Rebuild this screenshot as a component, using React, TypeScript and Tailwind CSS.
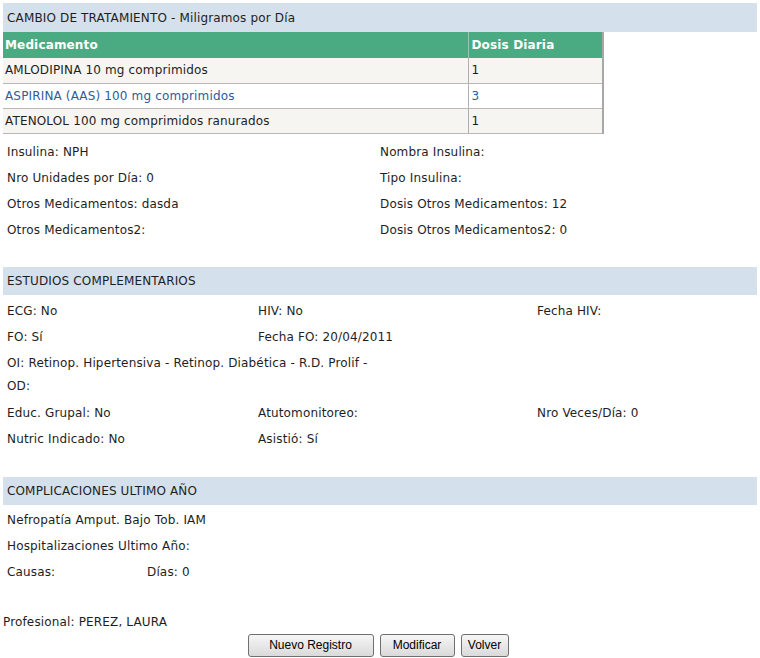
import React from "react";

const meds = [
  { name: "AMLODIPINA 10 mg comprimidos", dosis: "1", alt: false },
  { name: "ASPIRINA (AAS) 100 mg comprimidos", dosis: "3", alt: true },
  { name: "ATENOLOL 100 mg comprimidos ranurados", dosis: "1", alt: false },
];

const SectionHeader: React.FC<{ title: string }> = ({ title }) => (
  <div className="h-[28px] bg-[#d4e0ec] px-[4px] flex items-center">{title}</div>
);

const Row: React.FC<{ children: React.ReactNode }> = ({ children }) => (
  <div className="h-[26px] flex items-center px-[4px] whitespace-nowrap">{children}</div>
);

const Btn: React.FC<{ label: string; w: string }> = ({ label, w }) => (
  <button
    className={`${w} h-[23px] border border-[#707070] rounded-[3px] bg-gradient-to-b from-[#f6f6f6] to-[#dadada] text-[12px] text-black tracking-normal`}
    style={{ fontFamily: '"Liberation Sans", Arial, sans-serif' }}
  >
    {label}
  </button>
);

export default function App() {
  return (
    <div
      className="w-[760px] px-[3px] pt-[3px] text-[12px] tracking-[0.15px] text-[#1e1e1e]"
      style={{ fontFamily: '"DejaVu Sans", Tahoma, sans-serif' }}
    >
      {/* Tratamiento */}
      <div className="h-[29px] bg-[#d4e0ec] px-[4px] flex items-center">
        CAMBIO DE TRATAMIENTO - Miligramos por Día
      </div>
      <table className="w-[601px] border-collapse border-r-2 border-[#a8a8a8]">
        <thead>
          <tr className="h-[26px] bg-[#4aab82] text-white font-bold text-left">
            <th className="w-[465px] px-[2px] border-r border-[#8fc9ae]">Medicamento</th>
            <th className="px-[3px]">Dosis Diaria</th>
          </tr>
        </thead>
        <tbody>
          {meds.map((m) => (
            <tr
              key={m.name}
              className={`h-[25px] border-b border-[#b8b8b8] ${m.alt ? "bg-white text-[#2d5b9e]" : "bg-[#f6f5f1]"}`}
            >
              <td className="px-[2px] border-r border-[#b0b0b0]">{m.name}</td>
              <td className="px-[3px]">{m.dosis}</td>
            </tr>
          ))}
        </tbody>
      </table>

      <div className="mt-[5px] grid grid-cols-[373px_1fr]">
        <Row>Insulina: NPH</Row>
        <Row>Nombra Insulina:</Row>
        <Row>Nro Unidades por Día: 0</Row>
        <Row>Tipo Insulina:</Row>
        <Row>Otros Medicamentos: dasda</Row>
        <Row>Dosis Otros Medicamentos: 12</Row>
        <Row>Otros Medicamentos2:</Row>
        <Row>Dosis Otros Medicamentos2: 0</Row>
      </div>

      {/* Estudios */}
      <div className="mt-[24px]">
        <SectionHeader title="ESTUDIOS COMPLEMENTARIOS" />
      </div>
      <div className="mt-[3px] grid grid-cols-[251px_279px_1fr]">
        <Row>ECG: No</Row>
        <Row>HIV: No</Row>
        <Row>Fecha HIV:</Row>
        <Row>FO: Sí</Row>
        <Row>Fecha FO: 20/04/2011</Row>
        <Row>{""}</Row>
        <div className="col-span-3 py-[2px] px-[4px] leading-[23px]">
          OI: Retinop. Hipertensiva - Retinop. Diabética - R.D. Prolif -
          <br />
          OD:
        </div>
        <Row>Educ. Grupal: No</Row>
        <Row>Atutomonitoreo:</Row>
        <Row>Nro Veces/Día: 0</Row>
        <Row>Nutric Indicado: No</Row>
        <Row>Asistió: Sí</Row>
        <Row>{""}</Row>
      </div>

      {/* Complicaciones */}
      <div className="mt-[25px]">
        <SectionHeader title="COMPLICACIONES ULTIMO AÑO" />
      </div>
      <div className="mt-[2px]">
        <Row>Nefropatía Amput. Bajo Tob. IAM</Row>
        <Row>Hospitalizaciones Ultimo Año:</Row>
        <div className="h-[26px] flex items-center px-[4px]">
          <span className="w-[140px]">Causas:</span>
          <span>Días: 0</span>
        </div>
      </div>

      <div className="mt-[28px] h-[18px] flex items-center">Profesional: PEREZ, LAURA</div>
      <div className="mt-[3px] flex justify-center gap-[6px] pr-[4px]">
        <Btn label="Nuevo Registro" w="w-[126px]" />
        <Btn label="Modificar" w="w-[75px]" />
        <Btn label="Volver" w="w-[48px]" />
      </div>
    </div>
  );
}
